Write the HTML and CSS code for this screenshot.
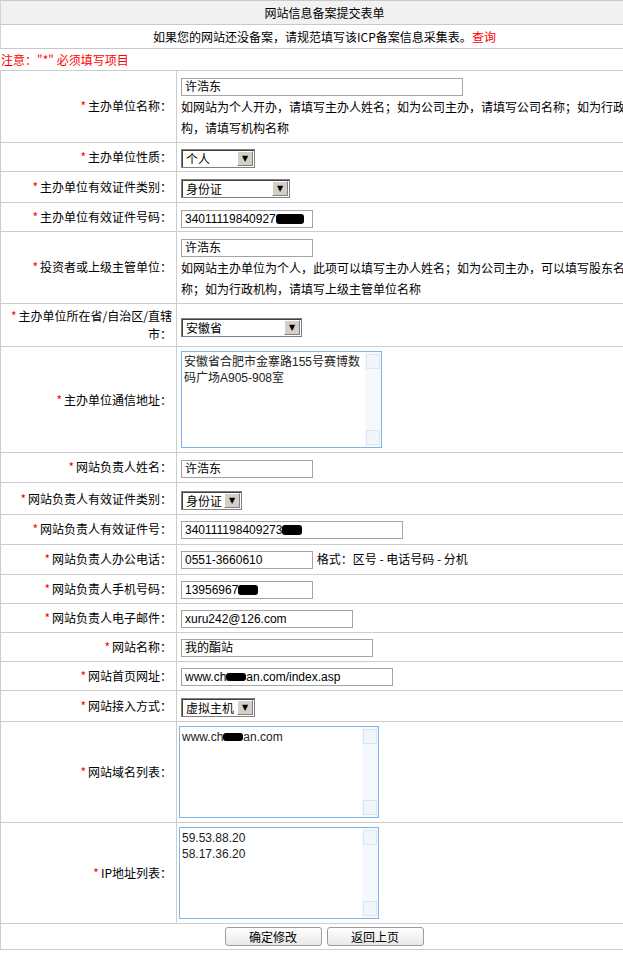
FILE: index.html
```html
<!DOCTYPE html>
<html lang="zh-CN">
<head>
    <meta charset="UTF-8">
    <title>网站信息备案提交表单</title>
    <link rel="stylesheet" href="styles.css">
</head>
<body>
<div class="wrap">
    <div class="title">网站信息备案提交表单</div>
    <div class="tip">如果您的网站还没备案，请规范填写该ICP备案信息采集表。<a href="#">查询</a></div>
    <div class="note">注意："*" 必须填写项目</div>

    <table class="form">
        <colgroup><col class="c1"><col></colgroup>
        <tr class="r-help">
            <th><span class="req">*</span>主办单位名称：</th>
            <td>
                <span class="tb w282">许浩东</span>
                <div class="help">如网站为个人开办，请填写主办人姓名；如为公司主办，请填写公司名称；如为行政机构，请填写机构名称</div>
            </td>
        </tr>
        <tr>
            <th><span class="req">*</span>主办单位性质：</th>
            <td><span class="sel"><select class="s74"><option>个人</option></select></span></td>
        </tr>
        <tr class="r31">
            <th><span class="req">*</span>主办单位有效证件类别：</th>
            <td><span class="sel"><select class="s109"><option>身份证</option></select></span></td>
        </tr>
        <tr>
            <th><span class="req">*</span>主办单位有效证件号码：</th>
            <td><span class="tb w132">34011119840927<i class="rd rd28"></i></span></td>
        </tr>
        <tr class="r-help">
            <th><span class="req">*</span>投资者或上级主管单位：</th>
            <td>
                <span class="tb w132">许浩东</span>
                <div class="help">如网站主办单位为个人，此项可以填写主办人姓名；如为公司主办，可以填写股东名称；如为行政机构，请填写上级主管单位名称</div>
            </td>
        </tr>
        <tr class="r-prov">
            <th><span class="req">*</span>主办单位所在省/自治区/直辖市：</th>
            <td><span class="sel"><select class="s121"><option>安徽省</option></select></span></td>
        </tr>
        <tr class="r-ta">
            <th><span class="req">*</span>主办单位通信地址：</th>
            <td>
                <div class="ta ta-addr">
                    <div class="ta-text">安徽省合肥市金寨路155号赛博数<br>码广场A905-908室</div>
                    <div class="ta-bar"><span></span><span></span></div>
                </div>
            </td>
        </tr>
        <tr class="r30">
            <th><span class="req">*</span>网站负责人姓名：</th>
            <td><span class="tb w132">许浩东</span></td>
        </tr>
        <tr class="r31">
            <th><span class="req">*</span>网站负责人有效证件类别：</th>
            <td><span class="sel"><select class="s61"><option>身份证</option></select></span></td>
        </tr>
        <tr class="r30">
            <th><span class="req">*</span>网站负责人有效证件号：</th>
            <td><span class="tb w222">340111198409273<i class="rd rd20"></i></span></td>
        </tr>
        <tr class="r30">
            <th><span class="req">*</span>网站负责人办公电话：</th>
            <td><span class="tb w132">0551-3660610</span> <span class="fmt">格式：区号 - 电话号码 - 分机</span></td>
        </tr>
        <tr>
            <th><span class="req">*</span>网站负责人手机号码：</th>
            <td><span class="tb w132">13956967<i class="rd rd20"></i></span></td>
        </tr>
        <tr>
            <th><span class="req">*</span>网站负责人电子邮件：</th>
            <td><span class="tb w172">xuru242@126.com</span></td>
        </tr>
        <tr>
            <th><span class="req">*</span>网站名称：</th>
            <td><span class="tb w192">我的酯站</span></td>
        </tr>
        <tr>
            <th><span class="req">*</span>网站首页网址：</th>
            <td><span class="tb w212">www.ch<i class="rd rd20 thin"></i>an.com/index.asp</span></td>
        </tr>
        <tr class="r31">
            <th><span class="req">*</span>网站接入方式：</th>
            <td><span class="sel"><select class="s74"><option>虚拟主机</option></select></span></td>
        </tr>
        <tr class="r-ta">
            <th><span class="req">*</span>网站域名列表：</th>
            <td>
                <div class="ta ta-list ta-dom">
                    <div class="ta-text">www.ch<i class="rd rd20 thin"></i>an.com</div>
                    <div class="ta-bar"><span></span><span></span></div>
                </div>
            </td>
        </tr>
        <tr class="r-ta">
            <th><span class="req">*</span>IP地址列表：</th>
            <td>
                <div class="ta ta-list ta-ip">
                    <div class="ta-text">59.53.88.20<br>58.17.36.20</div>
                    <div class="ta-bar"><span></span><span></span></div>
                </div>
            </td>
        </tr>
        <tr class="r-btn">
            <td colspan="2">
                <div class="btns">
                    <button class="btn" type="submit">确定修改</button>
                    <button class="btn" type="button">返回上页</button>
                </div>
            </td>
        </tr>
    </table>
</div>
</body>
</html>
```

FILE: styles.css
```css
html, body {
    margin: 0;
    overflow: hidden;
}
body {
    font-family: "Noto Sans CJK SC", "Liberation Sans", sans-serif;
    font-size: 12px;
    color: #000;
    background-color: #fff;
}
.wrap {
    width: 648px;
}
.title {
    height: 23px;
    line-height: 23px;
    text-align: center;
    background-color: #f1f1f1;
    border-top: 1px solid #c9c9c9;
    border-bottom: 1px solid #c9c9c9;
    border-left: 1px solid #d4d4d4;
}
.tip {
    height: 23px;
    line-height: 23px;
    text-align: center;
    border-bottom: 1px solid #c9c9c9;
    border-left: 1px solid #d4d4d4;
}
.tip a {
    color: #f00;
    text-decoration: none;
}
.note {
    height: 21px;
    line-height: 21px;
    color: #f00;
    padding-left: 1px;
}

/* form table */
.form {
    width: 648px;
    border-collapse: collapse;
    table-layout: fixed;
}
.form col.c1 {
    width: 176px;
}
.form th,
.form td {
    border: 1px solid #cdcdcd;
    padding: 3px 4px;
    line-height: 22px;
    vertical-align: middle;
}
.form th {
    font-weight: normal;
    text-align: right;
    padding-left: 2px;
}
.form td {
    text-align: left;
}
.form .r-help th, .form .r-help td {
    padding-bottom: 4px;
}
.form .r30 th, .form .r30 td {
    padding-bottom: 4px;
}
.form .r31 th, .form .r31 td {
    padding-top: 4px;
    padding-bottom: 4px;
}
.form .r-prov th {
    line-height: 18px;
    padding-top: 3px;
    padding-bottom: 3px;
}
.form .r-ta td {
    padding-top: 4px;
    padding-bottom: 4px;
}
.form .r-btn td {
    padding: 3px;
    line-height: 19px;
}
.req {
    color: #f00;
    margin-right: 2px;
}
.help {
    line-height: 21px;
}
.fmt {
    margin-left: 1px;
}

/* text boxes */
.tb {
    display: inline-block;
    box-sizing: border-box;
    height: 18px;
    line-height: 16px;
    padding: 0 3px;
    border: 1px solid #a4a4a4;
    background-color: #fff;
    font-family: "Liberation Sans", "Noto Sans CJK SC", sans-serif;
    font-size: 12px;
    white-space: nowrap;
    overflow: hidden;
    vertical-align: middle;
}
.w132 { width: 132px; }
.w172 { width: 172px; }
.w192 { width: 192px; }
.w212 { width: 212px; }
.w222 { width: 222px; }
.w282 { width: 282px; }

.rd {
    display: inline-block;
    height: 10px;
    background-color: #000;
    border-radius: 3px;
    vertical-align: -1px;
}
.rd20 { width: 20px; }
.rd28 { width: 28px; }
.rd.thin {
    height: 8px;
    vertical-align: 0;
}

/* selects */
.sel {
    display: inline-block;
    position: relative;
    vertical-align: middle;
}
.sel select {
    -webkit-appearance: none;
    appearance: none;
    display: block;
    box-sizing: border-box;
    height: 19px;
    margin: 0;
    padding: 0 18px 0 4px;
    border: 1px solid #808080;
    border-radius: 0;
    box-shadow: inset 1px 1px 0 #404040;
    background-color: #fff;
    color: #000;
    font-family: "Noto Sans CJK SC", sans-serif;
    font-size: 12px;
}
.sel::after {
    content: "▼";
    position: absolute;
    top: 2px;
    right: 2px;
    bottom: 2px;
    width: 14px;
    background-color: #d4d0c8;
    border: 1px solid;
    border-color: #fff #808080 #808080 #fff;
    font-family: "DejaVu Sans", sans-serif;
    font-size: 8px;
    line-height: 13px;
    text-align: center;
    color: #000;
}
.s61 { width: 61px; }
.s74 { width: 74px; }
.s109 { width: 109px; }
.s121 { width: 121px; }

/* textareas */
.ta {
    display: flex;
    box-sizing: border-box;
    border: 1px solid #7eb4ea;
    background-color: #fff;
}
.ta-addr {
    width: 201px;
    height: 97px;
}
.ta-list {
    width: 200px;
    height: 92px;
    margin-left: -2px;
}
.ta-text {
    flex: 1;
    padding: 2px 2px 0 2px;
    line-height: 16px;
    color: #222;
    font-family: "Liberation Sans", "Noto Sans CJK SC", sans-serif;
    white-space: nowrap;
    overflow: hidden;
}
.ta-bar {
    width: 16px;
    background-color: #f5f9fd;
    display: flex;
    flex-direction: column;
    justify-content: space-between;
    padding: 2px 1px;
    box-sizing: border-box;
}
.ta-bar span {
    height: 13px;
    border: 1px solid #dbe6f2;
    background-color: #f1f6fb;
}

/* buttons */
.btns {
    display: flex;
    justify-content: center;
    gap: 5px;
}
.btn {
    width: 97px;
    height: 19px;
    padding: 0;
    border: 1px solid #9c9c9c;
    border-radius: 3px;
    background: linear-gradient(#fff, #e8e8e8);
    font-family: "Noto Sans CJK SC", sans-serif;
    font-size: 12px;
    line-height: 17px;
    color: #000;
}
```
